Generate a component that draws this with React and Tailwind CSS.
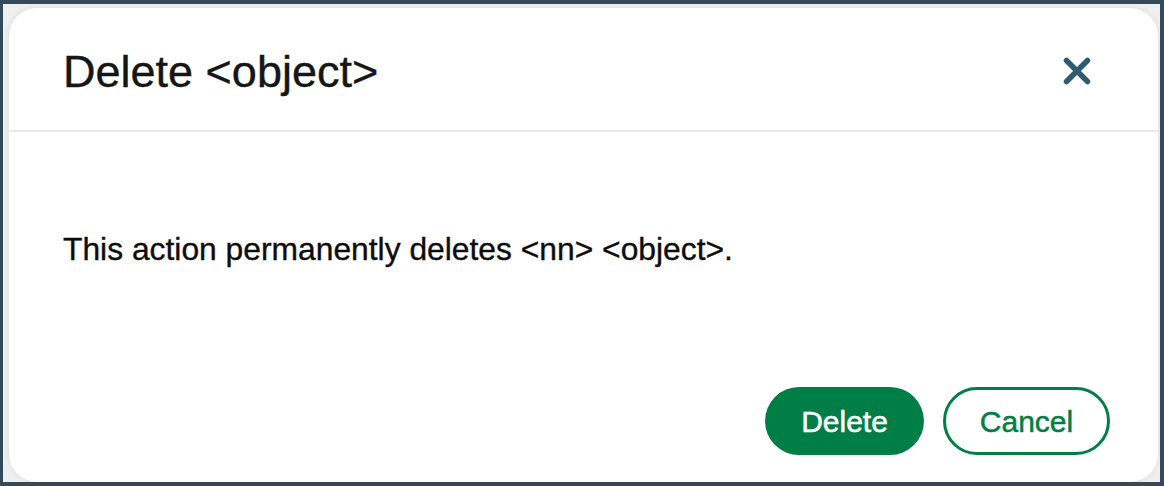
export default function App() {
  return (
    <div className="w-[1164px] h-[486px] bg-[#34495a] pt-1 pl-[3px] pr-1 pb-1 font-['Liberation_Sans',Arial,sans-serif]">
      <div className="w-full h-full bg-[#efefef] pt-1 pl-1.5 pr-0.5 overflow-hidden">
        <div className="h-full bg-white rounded-[28px] shadow-[0_0_6px_rgba(0,0,0,0.08)] flex flex-col">
          {/* header */}
          <div className="h-[124px] flex items-center justify-between pl-[54px] pr-[67px] border-b-2 border-[#e7eaea]">
            <h1 className="text-[45px] leading-none text-[#161616] pt-1 [-webkit-text-stroke:0.4px]">Delete &lt;object&gt;</h1>
            <button type="button" className="w-[28px] h-[28px] flex items-center justify-center mt-1">
              <svg width="28" height="28" viewBox="0 0 28 28">
                <path d="M3.5 3.5 L24.5 24.5 M24.5 3.5 L3.5 24.5" stroke="#2f5a70" strokeWidth="5.5" strokeLinecap="round" />
              </svg>
            </button>
          </div>

          {/* body */}
          <div className="pl-[54px] pt-[99px]">
            <p className="text-[31.8px] leading-9 text-[#0d0d0d] [-webkit-text-stroke:0.35px]">
              This action permanently deletes &lt;nn&gt; &lt;object&gt;.
            </p>
          </div>

          {/* footer */}
          <div className="mt-auto flex justify-end gap-[19px] pr-[48px] pb-[27px]">
            <button type="button" className="w-[159px] h-[68px] rounded-full bg-[#017e45] text-white text-[30px] [-webkit-text-stroke:0.5px]">
              Delete
            </button>
            <button type="button" className="w-[167px] h-[68px] rounded-full border-[3px] border-[#017e45] text-[#017e45] text-[30px] [-webkit-text-stroke:0.5px]">
              Cancel
            </button>
          </div>
        </div>
      </div>
    </div>
  );
}
